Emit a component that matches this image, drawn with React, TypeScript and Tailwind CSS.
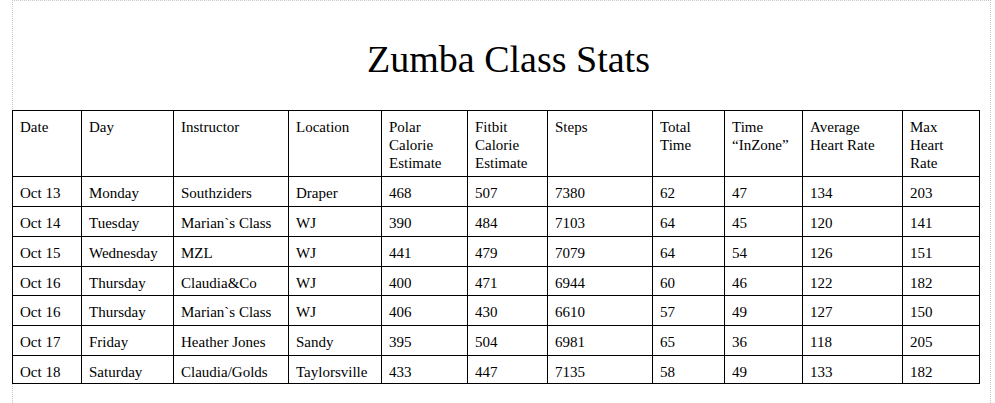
import React from "react";

type Row = { cells: string[]; h: string };

const header: React.ReactNode[] = [
  "Date",
  "Day",
  "Instructor",
  "Location",
  <>Polar<br />Calorie<br />Estimate</>,
  <>Fitbit<br />Calorie<br />Estimate</>,
  "Steps",
  <>Total<br />Time</>,
  <>Time<br />{"\u201CInZone\u201D"}</>,
  <>Average<br />Heart Rate</>,
  <>Max<br />Heart<br />Rate</>,
];

const rows: Row[] = [
  { cells: ["Oct 13", "Monday", "Southziders", "Draper", "468", "507", "7380", "62", "47", "134", "203"], h: "h-[30px]" },
  { cells: ["Oct 14", "Tuesday", "Marian`s Class", "WJ", "390", "484", "7103", "64", "45", "120", "141"], h: "h-[30px]" },
  { cells: ["Oct 15", "Wednesday", "MZL", "WJ", "441", "479", "7079", "64", "54", "126", "151"], h: "h-[30px]" },
  { cells: ["Oct 16", "Thursday", "Claudia&Co", "WJ", "400", "471", "6944", "60", "46", "122", "182"], h: "h-[29px]" },
  { cells: ["Oct 16", "Thursday", "Marian`s Class", "WJ", "406", "430", "6610", "57", "49", "127", "150"], h: "h-[30px]" },
  { cells: ["Oct 17", "Friday", "Heather Jones", "Sandy", "395", "504", "6981", "65", "36", "118", "205"], h: "h-[30px]" },
  { cells: ["Oct 18", "Saturday", "Claudia/Golds", "Taylorsville", "433", "447", "7135", "58", "49", "133", "182"], h: "h-[28px]" },
];

export default function App() {
  return (
    <div className="w-[995px] h-[403px] bg-white overflow-hidden font-['Liberation_Serif',serif] text-black">
      <div className="ml-[12px] w-[979px] h-[403px] border-l border-r border-t border-dotted border-[#c8c8c8]">
        <div className="mt-[39px] text-[38px] leading-[38px] text-center pl-[14px]">
          Zumba Class Stats
        </div>
        <div className="mt-[32px] -ml-px w-[968px] bg-white grid grid-cols-[69px_92px_115px_93px_86px_80px_105px_72px_78px_100px_77px] border-l border-t border-black text-[15px] leading-[18px]">
          {header.map((h, i) => (
            <div key={i} className="h-[66px] border-r border-b border-black pl-[7px] pt-[7px] whitespace-nowrap">
              {h}
            </div>
          ))}
          {rows.map((r, ri) =>
            r.cells.map((c, ci) => (
              <div key={`${ri}-${ci}`} className={`${r.h} border-r border-b border-black pl-[7px] pt-[7px] whitespace-nowrap`}>
                {c}
              </div>
            ))
          )}
        </div>
      </div>
    </div>
  );
}
